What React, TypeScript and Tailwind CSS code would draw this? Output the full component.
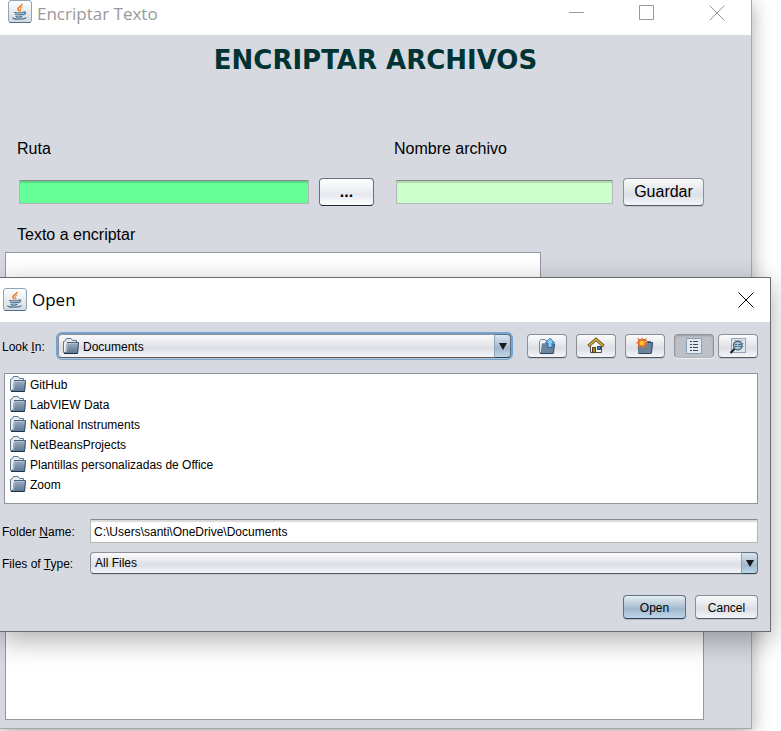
import React from "react";

const folders = [
  "GitHub",
  "LabVIEW Data",
  "National Instruments",
  "NetBeansProjects",
  "Plantillas personalizadas de Office",
  "Zoom",
];

const raised =
  "rounded-[4px] border border-[#8c8f95] border-b-[#55585e] bg-linear-to-b from-[#fbfbfc] via-[#dcdfe5] via-60% to-[#f4f6fa] shadow-[0_1px_0_#c0c4cc]";
const blue =
  "rounded-[4px] border border-[#5d7286] border-b-[#2c4357] bg-linear-to-b from-[#e6eef4] via-[#a3b8cc] via-60% to-[#bfd6ea] shadow-[0_1px_0_#b4bac4]";
const sunken =
  "border border-[#b4b8b8] border-t-[#858a8c] shadow-[inset_0_2px_1px_rgba(0,0,0,0.15)] outline-none";

function JavaIcon() {
  return (
    <svg width="24" height="24" viewBox="0 0 24 24" className="block shrink-0" aria-hidden="true">
      <defs>
        <linearGradient id="tile" x1="0" y1="0" x2="0" y2="1">
          <stop offset="0" stopColor="#ffffff" />
          <stop offset="1" stopColor="#d3d9e0" />
        </linearGradient>
      </defs>
      <rect x="0.5" y="0.5" width="23" height="22" rx="2.5" fill="url(#tile)" stroke="#8fa3b5" />
      <path d="M1.5 22.500h21" stroke="#4f6d88" />
      <path d="M13.8 4c.8 2.200-4.600 3-3.800 5.200.3.900 1.200 1.300 1.400 2.200" fill="none" stroke="#ee7b25" strokeWidth="1.700" />
      <path d="M14.4 7c-2.600 1-2.600 1.800-1.600 2.900.4.500.1 1-.4 1.600" fill="none" stroke="#f29a55" strokeWidth="1.200" />
      <path
        d="M6.500 12c-.6 1 8 1.100 9.400.2M7 14.200c1.500.9 6 .9 8.200 0M7.600 16.300c1.600.8 5 .8 6.800 0M5.200 17.600c-2 1.400 9 2.600 13.200.1"
        fill="none"
        stroke="#4d7596"
        strokeWidth="1.300"
      />
      <path d="M15.600 12c2.800-.6 2.600 2-.6 3" fill="none" stroke="#4d7596" strokeWidth="1.300" />
    </svg>
  );
}

function FolderIcon() {
  return (
    <svg width="16" height="16" viewBox="0 0 16 16" className="block shrink-0" aria-hidden="true">
      <defs>
        <linearGradient id="folder" x1="0" y1="0" x2="0" y2="1">
          <stop offset="0" stopColor="#a3b3c4" />
          <stop offset="1" stopColor="#587390" />
        </linearGradient>
      </defs>
      <path d="M.5 14.500V3.500L2.500 2.500 3.500.500h4.500L9.500 2.500h4v3H4.500l-1.500 9z" fill="#e6ecf2" stroke="#5f768d" />
      <path d="M4 4h12l-1 12H2.500z" fill="url(#folder)" />
      <path d="M15.500 4.500L14.500 15" fill="none" stroke="#3b536b" />
      <path d="M1 15.500h13.500" stroke="#1f3347" />
      <path d="M4 4.500h11.500" stroke="#4d647b" />
      <path d="M3.500 14L4.500 5.500H14.500" fill="none" stroke="#b3c1cf" />
    </svg>
  );
}

function UpIcon() {
  return (
    <svg width="18" height="18" viewBox="0 0 18 18" aria-hidden="true">
      <path d="M1.500 15.500v-11l1.500-2h4l1 1.500h3v3H4.500l-1 8.500z" fill="#eef2f6" stroke="#71869b" />
      <path d="M4 6.500h12.500l-1 9.500H2.500z" fill="#6b849d" />
      <path d="M16.500 7l-1 9M2 16.500h13.500" stroke="#2f475f" />
      <path d="M12 1.300l4.600 4.700h-2.600v4.500h-4V6H7.400z" fill="#8fcdf8" stroke="#1d6ca8" />
    </svg>
  );
}

function HomeIcon() {
  return (
    <svg width="18" height="18" viewBox="0 0 18 18" aria-hidden="true">
      <path d="M3.500 8.500L9 3.500l5.500 5v7h-11z" fill="#f6f6f8" stroke="#4d4d52" />
      <path d="M1.300 9.200L9 2.200l7.700 7" fill="none" stroke="#5f4708" strokeWidth="3" />
      <path d="M1.700 8.900L9 2.200l7.300 6.700" fill="none" stroke="#dcb64c" strokeWidth="1.400" />
      <path d="M5.500 10.500h3v5h-3z" fill="#b08a28" stroke="#4f3c0c" />
      <path d="M10.500 9.500h3v3h-3z" fill="#3f7fc0" stroke="#23435f" />
    </svg>
  );
}

function NewFolderIcon() {
  return (
    <svg width="18" height="18" viewBox="0 0 18 18" aria-hidden="true">
      <path d="M2.500 16V3.500l2-1h5l1.500 2h3.500V7H4.500z" fill="#eef2f6" stroke="#53697f" />
      <path d="M3.500 6h13.500L15.500 16H2.500z" fill="#6b849d" />
      <path d="M10 5.500h6.500L15.500 16M2.500 16.500h13" fill="none" stroke="#2f475f" />
      <path
        d="M6 0l1.300 3L11 .800 9.300 4.500l3.200 1.300-3.200 1.300L11 11 7.300 9 6 12.200 4.700 9 1 11l1.700-3.900L-.5 5.800l3.200-1.300L1 .800 4.700 3z"
        fill="#f26a22"
      />
      <circle cx="6" cy="5.900" r="2.500" fill="#ffbd2b" />
    </svg>
  );
}

function ListIcon() {
  return (
    <svg width="16" height="16" viewBox="0 0 16 16" aria-hidden="true">
      <rect x="0.500" y="0.500" width="15" height="15" fill="#e3ebf2" stroke="#8ba0b3" />
      <path d="M4 3.500h2M4 6.500h2M4 9.500h2M4 12.500h2M7 3.500h5M7 6.500h5M7 9.500h5M7 12.500h5" stroke="#3a4652" />
    </svg>
  );
}

function DetailsIcon() {
  return (
    <svg width="18" height="18" viewBox="0 0 18 18" aria-hidden="true">
      <rect x="2.500" y="1.500" width="14" height="14" fill="#dde6ee" stroke="#93a6b7" />
      <path d="M5 3.500h9M13 6.500h2M13 9.500h2" stroke="#aab6c2" />
      <path d="M5.600 11.800L1.500 16" stroke="#23282e" strokeWidth="2.200" />
      <circle cx="8.800" cy="8.600" r="4.300" fill="#a9c6dc" stroke="#4d5d6c" strokeWidth="1.300" />
      <path d="M6 7.500h2M9 7.500h3M6 9.500h2M9 9.500h3" stroke="#3f6a90" />
    </svg>
  );
}

function CloseIcon() {
  return (
    <svg width="16" height="16" viewBox="0 0 16 16" aria-hidden="true">
      <path d="M.500 .500l15 15M15.500 .500l-15 15" stroke="currentColor" />
    </svg>
  );
}

function Arrow() {
  return (
    <span className="pointer-events-none absolute inset-y-0 right-0 flex w-[17px] items-center justify-center rounded-r-[4px] border border-l-[#8fa3b5] border-[#5d7286] border-b-[#2c4357] bg-linear-to-b from-[#dbe6ee] via-[#a3b8cc] via-60% to-[#bfd6ea]">
      <svg width="8" height="7" viewBox="0 0 8 7" aria-hidden="true">
        <path d="M0 0h8L4 7z" fill="#16191d" />
      </svg>
    </span>
  );
}

function ToolButton({ label, children }: { label: string; children: React.ReactNode }) {
  return (
    <button aria-label={label} className={`flex h-6 w-10 items-center justify-center ${raised}`}>
      {children}
    </button>
  );
}

function OpenDialog() {
  return (
    <section
      role="dialog"
      aria-labelledby="dialog-title"
      className="absolute top-[277px] right-[10px] left-0 border border-l-0 border-[#6b6b6e] bg-[#d6d9e0] text-[12px] leading-5 shadow-[0_8px_26px_rgba(0,0,0,0.32)]"
    >
      <header className="flex h-11 items-center bg-white pr-4 pl-[3px]">
        <JavaIcon />
        <h2 id="dialog-title" className="ml-[5px] flex-1 font-['Open_Sans',sans-serif] text-[17px] leading-6">
          Open
        </h2>
        <button aria-label="Close" className="text-black">
          <CloseIcon />
        </button>
      </header>

      <div className="pt-[11px] pr-3 pb-3">
        <div className="flex h-[26px] items-center">
          <label htmlFor="look-in" className="w-14 shrink-0 pt-0.5 pl-0.5">
            Look <u>I</u>n:
          </label>
          <div className="relative ml-0.5 h-6 flex-1 rounded-[4px] ring-2 ring-[#73a4d1]">
            <select id="look-in" className={`block h-6 w-full appearance-none pt-0.5 pl-6 ${raised}`}>
              <option>Documents</option>
            </select>
            <span className="pointer-events-none absolute top-1 left-[5px]">
              <FolderIcon />
            </span>
            <Arrow />
          </div>
          <div className="ml-4 flex gap-[9px]">
            <ToolButton label="Up One Level">
              <UpIcon />
            </ToolButton>
            <ToolButton label="Home">
              <HomeIcon />
            </ToolButton>
            <ToolButton label="Create New Folder">
              <NewFolderIcon />
            </ToolButton>
            <div className="flex gap-1">
              <button
                aria-label="List"
                aria-pressed="true"
                className="flex h-6 w-10 items-center justify-center rounded-[4px] border border-[#92959b] border-b-[#b4b7bd] bg-[#bdc0c7] shadow-[0_1px_0_#eceef2,inset_0_1px_2px_rgba(0,0,0,0.2)]"
              >
                <ListIcon />
              </button>
              <ToolButton label="Details">
                <DetailsIcon />
              </ToolButton>
            </div>
          </div>
        </div>

        <ul className="mt-[14px] ml-1 h-[131px] border border-[#90949e] bg-white pl-[5px]">
          {folders.map((name) => (
            <li key={name} className="flex h-5 items-center gap-1">
              <FolderIcon />
              <span className="pt-0.5">{name}</span>
            </li>
          ))}
        </ul>

        <div className="mt-[15px] flex h-6 items-center">
          <label htmlFor="folder-name" className="w-[90px] shrink-0 pt-0.5 pl-0.5">
            Folder <u>N</u>ame:
          </label>
          <input
            id="folder-name"
            defaultValue="C:\Users\santi\OneDrive\Documents"
            className={`h-6 min-w-0 flex-1 bg-white px-[3px] pt-0.5 ${sunken}`}
          />
        </div>

        <div className="mt-2 flex h-6 items-center">
          <label htmlFor="file-type" className="w-[90px] shrink-0 pt-0.5 pl-0.5">
            Files of <u>T</u>ype:
          </label>
          <div className="relative h-[22px] flex-1">
            <select id="file-type" className={`block h-full w-full appearance-none pl-1 ${raised}`}>
              <option>All Files</option>
            </select>
            <Arrow />
          </div>
        </div>

        <div className="mt-5 flex justify-end gap-[9px]">
          <button className={`h-6 w-[63px] pt-0.5 ${blue}`}>Open</button>
          <button className={`h-6 w-[63px] pt-0.5 ${raised}`}>Cancel</button>
        </div>
      </div>
    </section>
  );
}

export default function App() {
  return (
    <main className="relative flex min-h-screen flex-col overflow-hidden bg-white font-['Liberation_Sans',Arial,sans-serif] text-black">
      <div className="mr-[29px] mb-0.5 flex flex-1 flex-col border-r border-b border-[#a6a6a8] bg-[#d6d9e0] shadow-[0_4px_18px_rgba(0,0,0,0.35)]">
        <header className="flex h-[35px] items-start bg-white pr-[26px] pl-2 text-[#999]">
          <JavaIcon />
          <h1 className="ml-[5px] flex-1 pt-0.5 font-['Open_Sans',sans-serif] text-[17px] leading-6">Encriptar Texto</h1>
          <div className="flex gap-[54px] pt-[5px]">
            <button aria-label="Minimize">
              <svg width="16" height="16" viewBox="0 0 16 16" aria-hidden="true">
                <path d="M0 7.500h15" stroke="currentColor" />
              </svg>
            </button>
            <button aria-label="Maximize">
              <svg width="16" height="16" viewBox="0 0 16 16" aria-hidden="true">
                <path d="M.500 .500h14v14h-14z" fill="none" stroke="currentColor" />
              </svg>
            </button>
            <button aria-label="Close window">
              <CloseIcon />
            </button>
          </div>
        </header>

        <div className="flex flex-1 flex-col pt-[9px] pb-2">
          <h2 className="text-center font-['Arial_Black','DejaVu_Sans',sans-serif] text-[26px] leading-8 font-black text-[#003333]">
            ENCRIPTAR ARCHIVOS
          </h2>

          <form className="mt-[61px] grid grid-cols-[359fr_308fr] gap-5 pr-[47px] pl-[17px]">
            <div>
              <label htmlFor="path" className="block leading-6">
                Ruta
              </label>
              <div className="mt-[17px] flex h-7 items-center gap-[10px] pl-0.5">
                <input id="path" className={`h-6 min-w-0 flex-1 bg-[#66ff99] px-1 ${sunken}`} />
                <button
                  type="button"
                  className="h-7 w-[55px] rounded-[4px] border border-[#6d7078] border-b-[#25282e] bg-linear-to-b from-white via-[#e6e9f0] via-60% to-white font-bold"
                >
                  ...
                </button>
              </div>
            </div>
            <div>
              <label htmlFor="file-name" className="block leading-6">
                Nombre archivo
              </label>
              <div className="mt-[17px] flex h-7 items-center gap-[10px] pl-0.5">
                <input id="file-name" className={`h-6 min-w-0 flex-1 bg-[#ccffcc] px-1 ${sunken}`} />
                <button type="button" className={`h-7 w-[81px] ${raised}`}>
                  Guardar
                </button>
              </div>
            </div>
          </form>

          <label htmlFor="plain-text" className="mt-[17px] pl-[17px] leading-6">
            Texto a encriptar
          </label>
          <textarea
            id="plain-text"
            className="mt-[5px] mr-[210px] ml-[5px] h-[180px] resize-none border border-[#9297a1] bg-white outline-none"
          />
          <textarea
            aria-label="Resultado"
            className="mt-12 mr-[47px] ml-[5px] flex-1 resize-none border border-[#9297a1] bg-white outline-none"
          />
        </div>
      </div>
      <OpenDialog />
    </main>
  );
}
